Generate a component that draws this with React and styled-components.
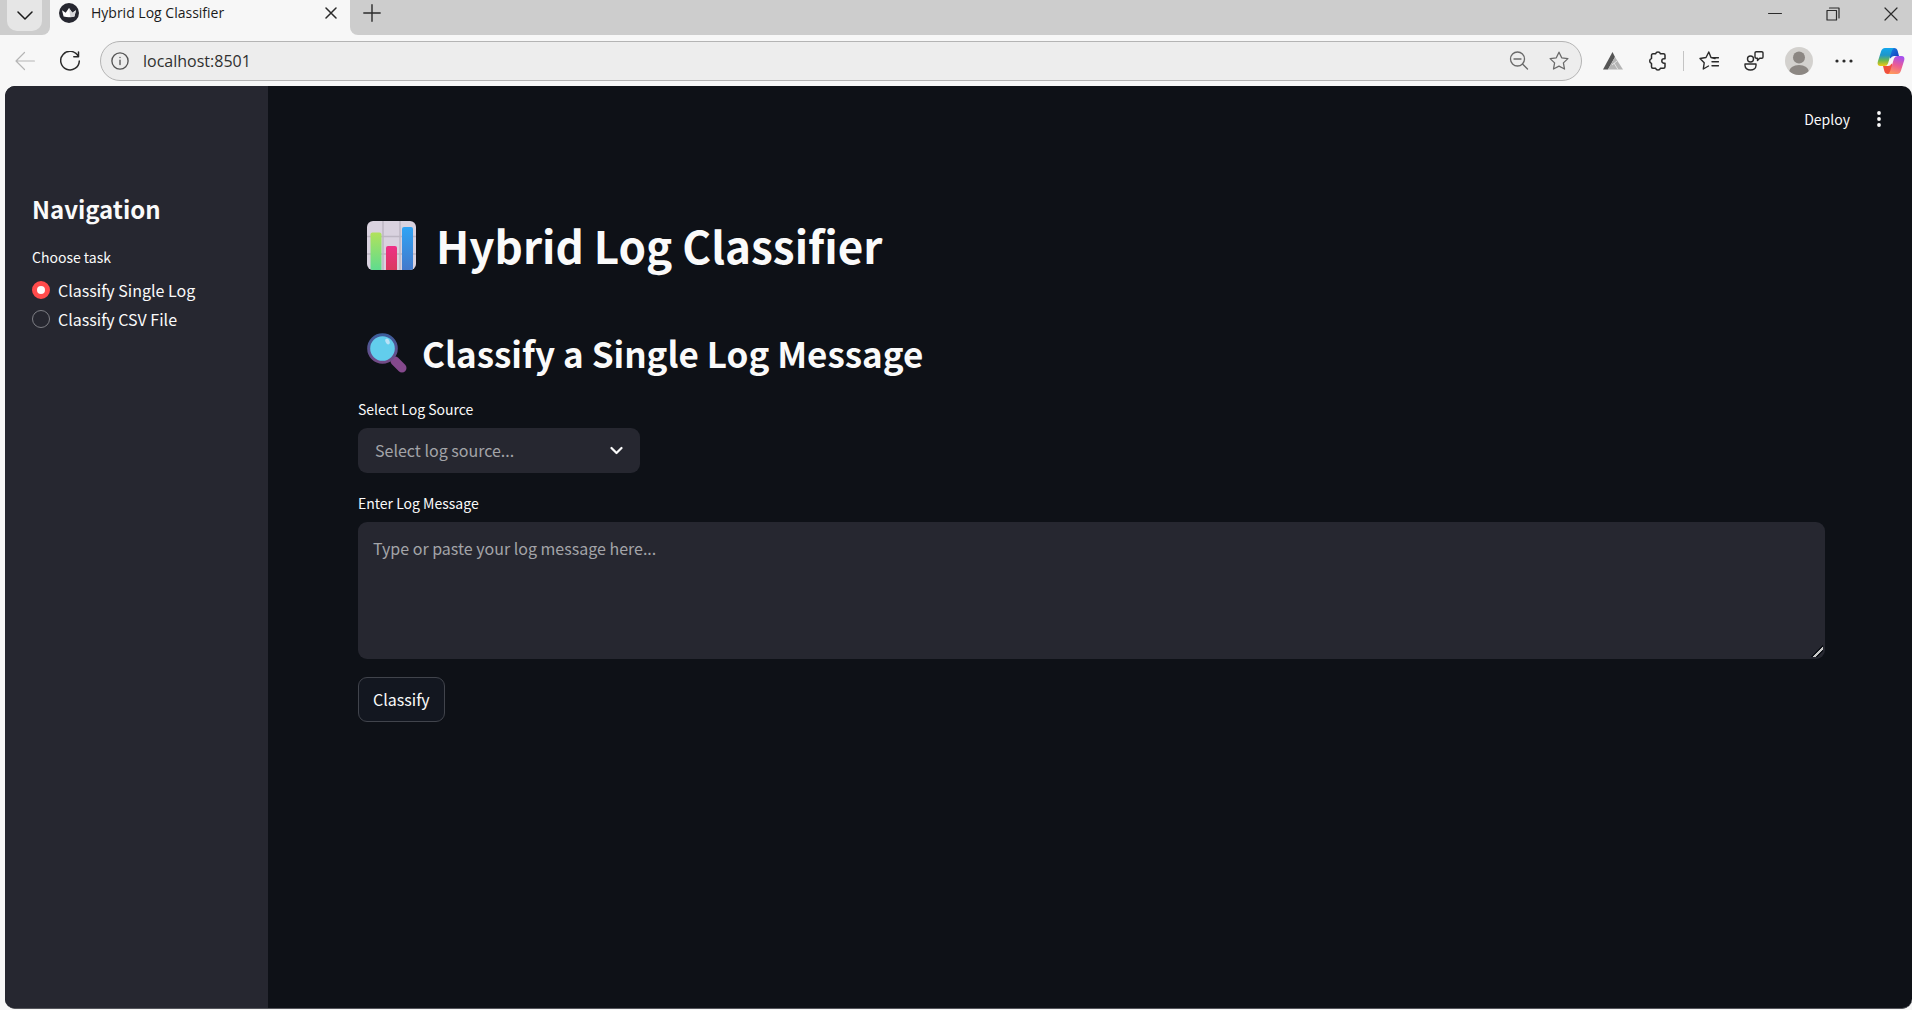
import React, { useState } from "react";
import styled, { createGlobalStyle } from "styled-components";

const uiFont = '"Noto Sans CJK SC", "Open Sans", sans-serif';
const chromeFont = '"Open Sans", "Noto Sans", sans-serif';

const GlobalStyle = createGlobalStyle`
  *, *::before, *::after { box-sizing: border-box; }
  html, body, #root { height: 100%; }
  body { margin: 0; background: #f7f7f7; overflow: hidden; }
  button, input, select, textarea { font: inherit; color: inherit; }
`;

const Window = styled.div`
  display: flex;
  flex-direction: column;
  height: 100vh;
  font-family: ${chromeFont};
  color: #1b1b1b;
`;

const TabStrip = styled.header`
  display: flex;
  align-items: stretch;
  height: 35px;
  background: #cdcdcd;
`;

const TabMenuArea = styled.div`
  display: flex;
  align-items: flex-start;
  width: 50px;
  padding-left: 7px;
  background: #cdcdcd;
  border-radius: 0 0 8px 0;
`;

const TabMenuButton = styled.button`
  display: grid;
  place-items: center;
  width: 35px;
  height: 31px;
  padding: 0;
  border: 0;
  border-radius: 0 0 10px 10px;
  background: #e6e6e6;
`;

const StripStart = styled.div`
  display: flex;
  background: #f7f7f7;
`;

const Tab = styled.div`
  display: flex;
  align-items: center;
  gap: 12px;
  width: 300px;
  padding: 0 11px 10px 9px;
  background: #f7f7f7;
  font-size: 14px;
  line-height: 20px;
`;

const TabTitle = styled.span`
  flex: 1;
  white-space: nowrap;
`;

const StripRest = styled.div`
  display: flex;
  flex: 1;
  justify-content: space-between;
  padding: 0 0 0 12px;
  background: #cdcdcd;
  border-radius: 0 0 0 8px;
`;

const StripEnd = styled.div`
  display: flex;
  flex: 1;
  background: #f7f7f7;
`;

const IconButton = styled.button`
  display: grid;
  place-items: center;
  flex: none;
  width: ${(p) => p.$w || 20}px;
  height: ${(p) => p.$h || 20}px;
  padding: 0;
  border: 0;
  background: none;
  color: ${(p) => p.$color || "#2b2b2b"};
`;

const WindowControls = styled.div`
  display: flex;
  gap: 16px;
`;

const Toolbar = styled.div`
  display: flex;
  align-items: center;
  height: 51px;
  padding: 0 5px 0 15px;
  background: #f7f7f7;
`;

const NavButtons = styled.div`
  display: flex;
  gap: 25px;
  margin-right: 20px;
`;

const AddressBar = styled.div`
  display: flex;
  flex: 1;
  align-items: center;
  gap: 14px;
  height: 40px;
  padding: 0 12px 0 10px;
  border: 1px solid #b4b4b4;
  border-radius: 20px;
  background: #ededed;
`;

const AddressInput = styled.input`
  flex: 1;
  min-width: 0;
  padding: 0;
  border: 0;
  outline: 0;
  background: none;
  font-size: 16px;
  line-height: 24px;
  color: #303030;
`;

const AddressActions = styled.div`
  display: flex;
  gap: 20px;
`;

const ToolbarActions = styled.div`
  display: flex;
  align-items: center;
  gap: 17px;
  margin-left: 17px;
`;

const ActionGroup = styled.div`
  display: flex;
  align-items: center;
  gap: 17px;
  padding-left: ${(p) => (p.$divided ? 12 : 0)}px;
`;

const Divider = styled.span`
  width: 1px;
  height: 20px;
  margin: 0 -6px 0 -6px;
  background: #c4c4c4;
`;

const Page = styled.div`
  display: flex;
  flex: 1;
  min-height: 0;
  margin: 0 0 1px 5px;
  border-bottom: 1px solid #55565c;
  border-radius: 10px;
  overflow: hidden;
  background: #0e1117;
  font-family: ${uiFont};
  color: #fafafa;
`;

const Sidebar = styled.aside`
  flex: none;
  width: 263px;
  padding: 107px 27px 0;
  background: #262730;
`;

const SidebarTitle = styled.h2`
  margin: 0 0 20px;
  font-size: 24px;
  line-height: 32px;
  font-weight: 600;
`;

const RadioGroup = styled.fieldset`
  display: flex;
  flex-direction: column;
  gap: 5px;
  margin: 0;
  padding: 0;
  border: 0;
`;

const Legend = styled.legend`
  margin-bottom: 8px;
  padding: 0;
  font-size: 14px;
  line-height: 25px;
`;

const RadioLabel = styled.label`
  display: flex;
  align-items: center;
  gap: 8px;
  font-size: 16px;
  line-height: 24px;
  white-space: nowrap;
`;

const Radio = styled.input`
  appearance: none;
  flex: none;
  width: 18px;
  height: 18px;
  margin: 0;
  border: 1px solid #7d7e84;
  border-radius: 50%;

  &:checked {
    border: 5px solid #ff4b4b;
    background: #fafafa;
  }
`;

const Main = styled.main`
  display: flex;
  flex: 1;
  flex-direction: column;
  min-width: 0;
`;

const AppHeader = styled.header`
  display: flex;
  align-items: center;
  justify-content: flex-end;
  gap: 19px;
  height: 66px;
  padding-right: 23px;
`;

const DeployButton = styled.button`
  padding: 0;
  border: 0;
  background: none;
  font-size: 14px;
  line-height: 24px;
`;

const Content = styled.div`
  display: flex;
  flex-direction: column;
  padding: 66px 87px 0 90px;
`;

const Heading = styled.div`
  display: flex;
  align-items: center;
  gap: ${(p) => p.$gap}px;
  padding-left: 9px;
`;

const Title = styled.h1`
  margin: 0;
  font-size: 44px;
  line-height: 54px;
  font-weight: 700;
`;

const Subtitle = styled.h2`
  margin: 0;
  font-size: 35px;
  line-height: 44px;
  font-weight: 600;
`;

const Headings = styled.div`
  display: flex;
  flex-direction: column;
  gap: 59px;
  margin-bottom: 22px;
`;

const Form = styled.form`
  display: flex;
  flex-direction: column;
  align-items: flex-start;
  gap: 18px;
`;

const Field = styled.div`
  display: flex;
  flex-direction: column;
  gap: 6px;
  width: ${(p) => p.$width || "100%"};
`;

const FieldLabel = styled.label`
  font-size: 14px;
  line-height: 25px;
`;

const SelectBox = styled.div`
  display: grid;
  align-items: center;

  & > * { grid-area: 1 / 1; }
  & > svg { justify-self: end; margin-right: 17px; pointer-events: none; }
`;

const Select = styled.select`
  appearance: none;
  width: 100%;
  height: 45px;
  padding: 0 40px 2px 17px;
  border: 0;
  border-radius: 9px;
  outline: 0;
  background: #262730;
  font-size: 16px;
  line-height: 24px;
  color: #a3a4a8;
`;

const TextArea = styled.textarea`
  display: block;
  width: 100%;
  height: 137px;
  padding: 14px 15px;
  border: 0;
  border-radius: 9px;
  outline: 0;
  background: #262730;
  font-size: 16px;
  line-height: 24px;
  resize: vertical;

  &::placeholder { color: #a3a4a8; opacity: 1; }

  &::-webkit-resizer {
    background: linear-gradient(135deg, transparent 52%, #0e1117 52% 60%, #c8c8c8 60% 70%, #0e1117 70% 78%, transparent 78%) 0 0 / 13px 13px no-repeat;
  }
`;

const SubmitButton = styled.button`
  height: 45px;
  padding: 0 14px 2px;
  border: 1px solid #41444c;
  border-radius: 9px;
  background: #131720;
  font-size: 16px;
  line-height: 24px;
`;

const Stroke = ({ size = 20, box = 20, w = 1.2, children }) => (
  <svg width={size} height={size} viewBox={`0 0 ${box} ${box}`} fill="none" stroke="currentColor" strokeWidth={w} strokeLinecap="round" strokeLinejoin="round" aria-hidden="true">
    {children}
  </svg>
);

const starPath = "M10 1.2l2.7 5.6 6.2.8-4.5 4.3 1.1 6.1L10 15.1 4.5 18l1.1-6.1L1.1 7.6l6.2-.8z";

const CrownIcon = () => (
  <svg width="20" height="20" viewBox="0 0 20 20" aria-hidden="true">
    <circle cx="10" cy="10" r="10" fill="#262730" />
    <path d="M3 7.2l3.7 2.6L10 5l3.3 4.8L17 7.2l-1.6 6.2q-5.4 1.6-10.8 0z" fill="#fff" />
    <path d="M10 5l3.3 4.8L17 7.2l-1.6 6.2q-2 .6-4 .8z" fill="#d5d5d8" />
  </svg>
);

const CopilotIcon = () => (
  <svg width="28" height="26" viewBox="0 0 28 26" aria-hidden="true">
    <defs>
      <linearGradient id="cpLeft" x1="0" y1="0" x2="0" y2="1">
        <stop offset="0" stopColor="#12a7ee" />
        <stop offset="0.4" stopColor="#1f96c9" />
        <stop offset="0.7" stopColor="#6fb84e" />
        <stop offset="1" stopColor="#f2c811" />
      </linearGradient>
      <linearGradient id="cpTop" x1="0" y1="0" x2="1" y2="1">
        <stop offset="0" stopColor="#1785e5" />
        <stop offset="1" stopColor="#1637b8" />
      </linearGradient>
      <linearGradient id="cpRight" x1="0.4" y1="1" x2="0.7" y2="0">
        <stop offset="0" stopColor="#a650ee" />
        <stop offset="0.5" stopColor="#ec5c94" />
        <stop offset="1" stopColor="#ff9a5b" />
      </linearGradient>
    </defs>
    <path d="M13 0h4q3 0 3.700 3l1.300 5h-5q-2.500 0-3.500 2.500L12 8z" fill="url(#cpTop)" />
    <path d="M13 0h4q3 0 3.700 3l1.300 5h-5q-2.500 0-3.500 2.500L12 8z" fill="#f0503c" transform="rotate(180 14 13)" />
    <path d="M8 0h9q-1.600 1-2.200 3L11 15.500q-.8 2.500-3.500 2.500h-4Q0 18 .7 14L4 3.500Q5 0 8 0z" fill="url(#cpLeft)" />
    <path d="M8 0h9q-1.600 1-2.200 3L11 15.500q-.8 2.500-3.500 2.500h-4Q0 18 .7 14L4 3.500Q5 0 8 0z" fill="url(#cpRight)" transform="rotate(180 14 13)" />
  </svg>
);

const ChartEmoji = () => (
  <svg width="49" height="49" viewBox="0 0 49 49" role="img" aria-label="Bar chart">
    <defs>
      <linearGradient id="barGreen" x1="0" y1="0" x2="0" y2="1">
        <stop offset="0" stopColor="#b1e25c" />
        <stop offset="1" stopColor="#5fdc8e" />
      </linearGradient>
      <linearGradient id="barRed" x1="0" y1="0" x2="0" y2="1">
        <stop offset="0" stopColor="#ee2f87" />
        <stop offset="1" stopColor="#d93a5e" />
      </linearGradient>
      <linearGradient id="barBlue" x1="0" y1="0" x2="0" y2="1">
        <stop offset="0" stopColor="#30a4f5" />
        <stop offset="1" stopColor="#4379cb" />
      </linearGradient>
      <clipPath id="chartClip"><rect width="49" height="49" rx="6" /></clipPath>
    </defs>
    <g clipPath="url(#chartClip)">
      <rect width="49" height="49" fill="#d9d2df" />
      <path d="M16 0v49M33 0v49M0 15.500h49M0 33h49" stroke="#bdb6c3" strokeWidth="1.500" />
      <path d="M3.500 49V13.500q0-2 2-2h7q2 0 2 2V49z" fill="url(#barGreen)" />
      <path d="M19 49V27q0-2 2-2h7q2 0 2 2v22z" fill="url(#barRed)" />
      <path d="M35 49V8q0-2 2-2h7q2 0 2 2v41z" fill="url(#barBlue)" />
    </g>
  </svg>
);

const SearchEmoji = () => (
  <svg width="40" height="40" viewBox="0 0 40 40" role="img" aria-label="Magnifying glass">
    <defs>
      <linearGradient id="rim" x1="0" y1="0" x2="0" y2="1">
        <stop offset="0" stopColor="#3c5d9b" />
        <stop offset="1" stopColor="#734a86" />
      </linearGradient>
    </defs>
    <path d="M28 28l7 7" stroke="#85498d" strokeWidth="9" strokeLinecap="round" />
    <circle cx="15.500" cy="15.500" r="13.800" fill="#62cdec" stroke="url(#rim)" strokeWidth="3" />
    <ellipse cx="20.500" cy="8.500" rx="2" ry="3" fill="#b9e2f7" transform="rotate(-25 20.500 8.500)" />
  </svg>
);

export default function App() {
  const [task, setTask] = useState("single");
  const tasks = [
    { id: "single", label: "Classify Single Log" },
    { id: "csv", label: "Classify CSV File" },
  ];

  return (
    <Window>
      <GlobalStyle />
      <TabStrip>
        <StripStart>
          <TabMenuArea>
            <TabMenuButton aria-label="Tab actions">
              <Stroke size={16} box={16} w={1.5}><path d="M1 4l7 7 7-7" /></Stroke>
            </TabMenuButton>
          </TabMenuArea>
        </StripStart>
        <Tab>
          <CrownIcon />
          <TabTitle>Hybrid Log Classifier</TabTitle>
          <IconButton aria-label="Close tab" $w={16} $h={16}>
            <Stroke size={12} box={12} w={1.5}><path d="M1 1l10 10M11 1L1 11" /></Stroke>
          </IconButton>
        </Tab>
        <StripEnd>
          <StripRest>
            <IconButton aria-label="New tab" $h={25}>
              <Stroke size={18} box={18} w={1.4}><path d="M9 .8v16.400M.8 9h16.400" /></Stroke>
            </IconButton>
            <WindowControls>
              <IconButton aria-label="Minimize" $w={42} $h={28}>
                <Stroke size={14} box={14} w={1}><path d="M.5 6.500h13" /></Stroke>
              </IconButton>
              <IconButton aria-label="Restore" $w={42} $h={28}>
                <Stroke size={14} box={14} w={1.200}><path d="M1 3.500h9.500V13H1zM3.500 1H13v10" /></Stroke>
              </IconButton>
              <IconButton aria-label="Close" $w={42} $h={28}>
                <Stroke size={14} box={14} w={1.200}><path d="M1 1l12 12M13 1L1 13" /></Stroke>
              </IconButton>
            </WindowControls>
          </StripRest>
        </StripEnd>
      </TabStrip>

      <Toolbar>
        <NavButtons>
          <IconButton aria-label="Back" $color="#b5b5b5">
            <Stroke><path d="M19.400 10H1M9.500 1.500L1 10l8.500 8.500" /></Stroke>
          </IconButton>
          <IconButton aria-label="Refresh">
            <Stroke w={1.500}><path d="M18.200 5.200A9.300 9.300 0 1 0 19.300 10M18.500 1v4.700h-4.700" /></Stroke>
          </IconButton>
        </NavButtons>
        <AddressBar>
          <IconButton aria-label="Site information" $w={18} $color="#555">
            <Stroke size={18} w={1.500}><circle cx="10" cy="10" r="9" /><path d="M10 9v5M10 6v.2" /></Stroke>
          </IconButton>
          <AddressInput aria-label="Address" defaultValue="localhost:8501" />
          <AddressActions>
            <IconButton aria-label="Zoom" $color="#6a6a6a">
              <Stroke w={1.300}><circle cx="8.500" cy="8" r="7" /><path d="M5 8h7M13.500 13l5 5" /></Stroke>
            </IconButton>
            <IconButton aria-label="Favorite" $color="#6a6a6a">
              <Stroke w={1.300}><path d={starPath} /></Stroke>
            </IconButton>
          </AddressActions>
        </AddressBar>
        <ToolbarActions>
          <ActionGroup>
            <IconButton aria-label="Extension" $w={28} $h={28}>
              <svg width="20" height="20" viewBox="0 0 20 20"><path d="M9.500 1L0 18.500h5L12 6z" fill="#555" /><path d="M12 6L5 18.500h15z" fill="#b4b4b4" /><path d="M11 12l4 6.500M14 10l-5 4" stroke="#eee" strokeWidth=".8" /></svg>
            </IconButton>
            <IconButton aria-label="Extensions" $w={28} $h={28}>
              <Stroke w={1.500}><path d="M5 2.800h2.600a2.500 2.500 0 0 1 4.800 0H15.500q1.500 0 1.500 1.500V7.800h-1a2.200 2.200 0 0 0 0 4.400h1v3.500q0 1.500-1.500 1.500H12.400a2.500 2.500 0 0 1-4.800 0H5q-1.500 0-1.500-1.500V12.400a2.500 2.500 0 0 1 0-4.800V4.300Q3.500 2.800 5 2.800z" /></Stroke>
            </IconButton>
          </ActionGroup>
          <Divider />
          <ActionGroup>
            <IconButton aria-label="Favorites" $w={28} $h={28}>
              <Stroke w={1.400}><path d="M16 7.500l-4-1L9.800 1 7 6.500 1 7.500l4.200 4.300-.9 6.200L9.500 15M13 6.800h6.500M13 10.800h6.500M13 14.800h6.500" /></Stroke>
            </IconButton>
            <IconButton aria-label="Copilot chat" $w={28} $h={28}>
              <Stroke w={1.400}><circle cx="6.500" cy="8" r="3" /><path d="M1 13h11v1.500c0 6-11 6-11 0zM11 2q0-1.300 1.300-1.300h5.400Q19 .7 19 2v4q0 1.300-1.300 1.300h-2L13.500 9.500V7.300Q11 7.300 11 6z" /></Stroke>
            </IconButton>
            <IconButton aria-label="Profile" $w={28} $h={28}>
              <svg width="28" height="28" viewBox="0 0 28 28"><clipPath id="avatar"><circle cx="14" cy="14" r="14" /></clipPath><g clipPath="url(#avatar)"><rect width="28" height="28" fill="#d3d1ce" /><circle cx="14" cy="10.500" r="6" fill="#8c8783" /><ellipse cx="14" cy="25" rx="10" ry="7" fill="#8c8783" /></g></svg>
            </IconButton>
            <IconButton aria-label="Settings" $w={28} $h={28}>
              <svg width="18" height="4" viewBox="0 0 18 4" fill="#2b2b2b"><circle cx="2" cy="2" r="1.600" /><circle cx="9" cy="2" r="1.600" /><circle cx="16" cy="2" r="1.600" /></svg>
            </IconButton>
          </ActionGroup>
          <IconButton aria-label="Copilot" $w={32} $h={28}><CopilotIcon /></IconButton>
        </ToolbarActions>
      </Toolbar>

      <Page>
        <Sidebar>
          <SidebarTitle>Navigation</SidebarTitle>
          <RadioGroup>
            <Legend>Choose task</Legend>
            {tasks.map((t) => (
              <RadioLabel key={t.id}>
                <Radio type="radio" name="task" checked={task === t.id} onChange={() => setTask(t.id)} />
                {t.label}
              </RadioLabel>
            ))}
          </RadioGroup>
        </Sidebar>
        <Main>
          <AppHeader>
            <DeployButton>Deploy</DeployButton>
            <IconButton aria-label="Menu">
              <svg width="4" height="16" viewBox="0 0 4 16" fill="#fafafa"><circle cx="2" cy="2" r="1.900" /><circle cx="2" cy="8" r="1.900" /><circle cx="2" cy="14" r="1.900" /></svg>
            </IconButton>
          </AppHeader>
          <Content>
            <Headings>
              <Heading $gap={20}><ChartEmoji /><Title>Hybrid Log Classifier</Title></Heading>
              <Heading $gap={15}><SearchEmoji /><Subtitle>Classify a Single Log Message</Subtitle></Heading>
            </Headings>
            <Form onSubmit={(e) => e.preventDefault()}>
              <Field $width="282px">
                <FieldLabel htmlFor="source">Select Log Source</FieldLabel>
                <SelectBox>
                  <Select id="source" defaultValue="">
                    <option value="">Select log source...</option>
                  </Select>
                  <Stroke size={13} box={13} w={2.200}><path d="M1.500 4l5 5 5-5" /></Stroke>
                </SelectBox>
              </Field>
              <Field>
                <FieldLabel htmlFor="message">Enter Log Message</FieldLabel>
                <TextArea id="message" placeholder="Type or paste your log message here..." />
              </Field>
              <SubmitButton type="submit">Classify</SubmitButton>
            </Form>
          </Content>
        </Main>
      </Page>
    </Window>
  );
}
